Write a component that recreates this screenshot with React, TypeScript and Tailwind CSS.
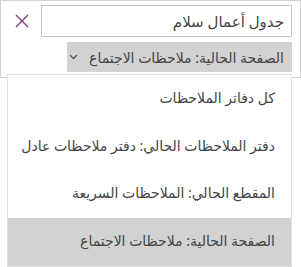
import React from "react";

export default function App() {
  const items = [
    "كل دفاتر الملاحظات",
    "دفتر الملاحظات الحالي: دفتر ملاحظات عادل",
    "المقطع الحالي: الملاحظات السريعة",
    "الصفحة الحالية: ملاحظات الاجتماع",
  ];
  return (
    <div className="relative w-[301px] h-[267px] bg-white" style={{ fontFamily: '"Noto Sans", "DejaVu Sans", sans-serif' }}>
      <div className="w-[301px] h-[78px] border border-[#d2d2d2] pt-[4px]">
        <div className="flex items-center h-[32px]">
          <div className="w-[40px] flex justify-center">
            <svg width="14" height="14" viewBox="0 0 14 14" className="ml-[2px]">
              <path d="M1 1 L13 13 M13 1 L1 13" stroke="#80397b" strokeWidth="1.4" fill="none" />
            </svg>
          </div>
          <div dir="rtl" className="w-[251px] h-[32px] border border-[#c6c6c6] flex items-center pr-[7px] text-[15px] text-[#444]">
            جدول أعمال سلام
          </div>
        </div>
        <div className="flex justify-end mt-[5px] pr-[8px]">
          <div dir="rtl" className="w-[225px] h-[30px] bg-[#d2d2d2] flex items-center pr-[8px] gap-[11px] text-[14px] text-[#444]">
            <span>الصفحة الحالية: ملاحظات الاجتماع</span>
            <svg width="9" height="6" viewBox="0 0 9 6">
              <path d="M1 1 L4.5 4.5 L8 1" stroke="#555" strokeWidth="1.3" fill="none" />
            </svg>
          </div>
        </div>
      </div>
      <div dir="rtl" className="absolute left-[7px] top-[74px] w-[285px] h-[193px] bg-white border border-[#e2e2e2] flex flex-col">
        {items.map((t, i) => (
          <div
            key={i}
            className={`h-[48px] flex items-center pr-[16px] pb-[3px] text-[14px] text-[#444] ${i === 3 ? "bg-[#d2d2d2]" : ""}`}
          >
            {t}
          </div>
        ))}
      </div>
    </div>
  );
}
